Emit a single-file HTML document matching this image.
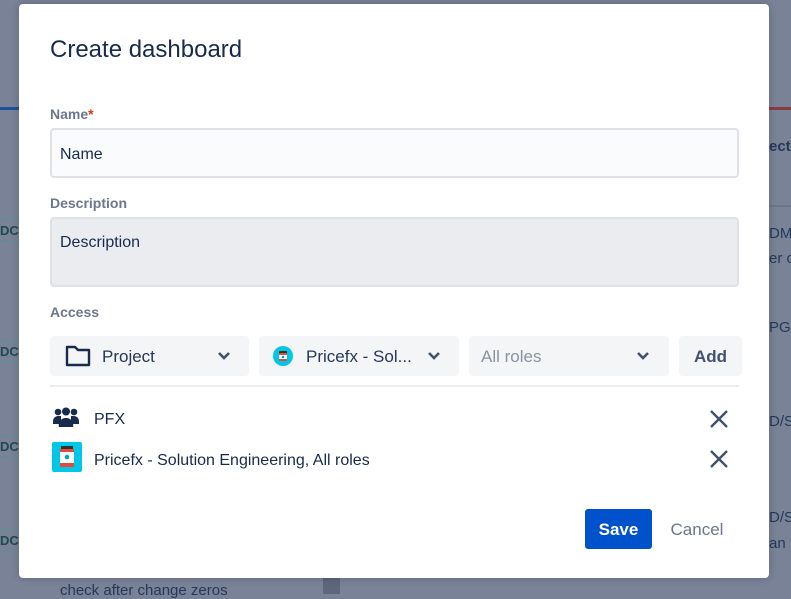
<!DOCTYPE html>
<html><head><meta charset="utf-8"><style>
*{box-sizing:border-box;margin:0;padding:0}
body{width:791px;height:594px;overflow:hidden;background:#798297;font-family:"Liberation Sans",sans-serif;position:relative;color:#172b4d}
.bg{position:absolute;color:#253858;font-size:15px;white-space:nowrap}
.dc{position:absolute;left:0;width:19px;height:22px;border-top:1px solid #5b8f93;border-bottom:1px solid #5b8f93;color:#1e4a50;font-size:13px;font-weight:bold;padding-top:3px;overflow:hidden}
.modal{position:absolute;left:19px;top:4px;width:750px;height:574px;background:#fff;border-radius:4px;box-shadow:0 0 8px rgba(0,0,0,.2)}
h1{position:absolute;left:31px;top:32px;font-size:24px;font-weight:normal;color:#172b4d}
.lab{position:absolute;left:31px;font-size:14px;font-weight:bold;color:#6b778c}
.inp{position:absolute;left:31px;width:689px;border:2px solid #dfe1e6;border-radius:4px;font-size:16px;padding:0 8px;color:#172b4d}
.sel{position:absolute;top:332px;height:40px;background:#f4f5f7;border-radius:4px;font-size:17px;color:#253858;line-height:42px}
.chev{position:absolute;top:15px;width:14px;height:10px}
.row{position:absolute;left:75px;font-size:16px;color:#172b4d}
.x{position:absolute;left:689px;width:22px;height:22px}
</style></head><body>
<div style="position:absolute;left:0;top:107px;width:19px;height:3px;background:#1f4fa0"></div>
<div style="position:absolute;left:769px;top:107px;width:22px;height:3px;background:#8a3b3e"></div>
<div style="position:absolute;left:769px;top:205px;width:22px;height:2px;background:#6d7588"></div>
<div class="dc" style="top:219px">DC</div>
<div class="dc" style="top:340px">DC</div>
<div class="dc" style="top:435px">DC</div>
<div class="dc" style="top:529px">DC</div>
<div class="bg" style="left:769px;top:138px;font-weight:bold">ect</div>
<div class="bg" style="left:769px;top:225px">DM</div>
<div class="bg" style="left:769px;top:250px">er o</div>
<div class="bg" style="left:769px;top:319px">PG</div>
<div class="bg" style="left:769px;top:413px">D/S</div>
<div class="bg" style="left:769px;top:509px">D/S</div>
<div class="bg" style="left:769px;top:535px">an</div>
<div class="bg" style="left:60px;top:582px">check after change zeros</div>
<div style="position:absolute;left:323px;top:578px;width:17px;height:16px;background:#5d667a"></div>
<div class="modal">
<h1>Create dashboard</h1>
<div class="lab" style="top:102px">Name<span style="color:#de350b">*</span></div>
<div class="inp" style="top:124px;height:50px;background:#fafbfc;line-height:50px">Name</div>
<div class="lab" style="top:191px">Description</div>
<div class="inp" style="top:213px;height:70px;background:#ebecf0;padding-top:15px">Description</div>
<div class="lab" style="top:300px">Access</div>
<div class="sel" style="left:31px;width:199px">
<svg style="position:absolute;left:14px;top:8px" width="28" height="24" viewBox="0 0 28 24"><path d="M3 3h8l3 3h11v15H3z" fill="none" stroke="#172b4d" stroke-width="2.4" stroke-linejoin="round"/></svg>
<span style="position:absolute;left:52px">Project</span>
<svg class="chev" style="left:167px" viewBox="0 0 14 10"><path d="M2 2l5 5 5-5" fill="none" stroke="#42526e" stroke-width="2.6"/></svg></div>
<div class="sel" style="left:240px;width:200px">
<svg style="position:absolute;left:14px;top:10px" width="20" height="20" viewBox="0 0 20 20"><circle cx="10" cy="10" r="10" fill="#00c7e6"/><rect x="6" y="5" width="8" height="2" fill="#333"/><rect x="6" y="7" width="8" height="8" fill="#fff"/><rect x="6" y="7" width="8" height="2" fill="#e5493a"/><rect x="6" y="13" width="8" height="2" fill="#e5493a"/><circle cx="10" cy="11" r="1.3" fill="#00a3bf"/></svg>
<span style="position:absolute;left:47px">Pricefx - Sol...</span>
<svg class="chev" style="left:168px" viewBox="0 0 14 10"><path d="M2 2l5 5 5-5" fill="none" stroke="#42526e" stroke-width="2.6"/></svg></div>
<div class="sel" style="left:450px;width:200px;color:#8993a4">
<span style="position:absolute;left:12px">All roles</span>
<svg class="chev" style="left:167px" viewBox="0 0 14 10"><path d="M2 2l5 5 5-5" fill="none" stroke="#42526e" stroke-width="2.6"/></svg></div>
<div class="sel" style="left:660px;width:63px;font-weight:bold;text-align:center;color:#42526e">Add</div>
<div style="position:absolute;left:31px;top:381px;width:689px;height:2px;background:#ebecf0"></div>
<svg style="position:absolute;left:34px;top:403px" width="26" height="22" viewBox="0 0 26 22"><g fill="#172b4d"><circle cx="5" cy="5" r="3.3"/><circle cx="21" cy="5" r="3.3"/><circle cx="13" cy="4.5" r="4"/><path d="M0 14a5 5 0 0 1 5-5h3v8H0z"/><path d="M26 14a5 5 0 0 0-5-5h-3v8h8z"/><path d="M6 20a7 7 0 0 1 7-9a7 7 0 0 1 7 9z"/></g></svg>
<div class="row" style="top:407px">PFX</div>
<svg style="position:absolute;left:33px;top:438px" width="30" height="30" viewBox="0 0 30 30"><rect width="30" height="30" rx="2" fill="#00c7e6"/><rect x="9" y="4" width="12" height="3" fill="#333"/><rect x="8" y="7" width="14" height="18" fill="#fff"/><rect x="8" y="7" width="14" height="3" fill="#e5493a"/><rect x="8" y="21" width="14" height="4" fill="#e5493a"/><circle cx="15" cy="15" r="2.3" fill="#00a3bf"/></svg>
<div class="row" style="top:448px">Pricefx - Solution Engineering, All roles</div>
<svg class="x" style="top:404px" viewBox="0 0 22 22"><path d="M3 3l16 16M19 3L3 19" stroke="#42526e" stroke-width="2.4"/></svg>
<svg class="x" style="top:444px" viewBox="0 0 22 22"><path d="M3 3l16 16M19 3L3 19" stroke="#42526e" stroke-width="2.4"/></svg>
<div style="position:absolute;left:566px;top:505px;width:67px;height:40px;background:#0052cc;border-radius:3px;color:#fff;font-weight:bold;font-size:17px;text-align:center;line-height:42px">Save</div>
<div style="position:absolute;left:638px;top:505px;width:80px;height:40px;color:#6b778c;font-size:17px;text-align:center;line-height:42px">Cancel</div>
</div>
</body></html>
